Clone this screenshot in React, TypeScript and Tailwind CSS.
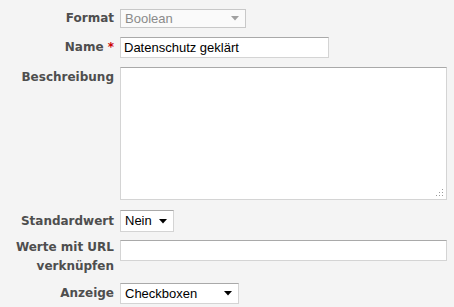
import React from 'react';

const label = "text-right text-[12px] font-bold text-[#4e4e4e] leading-[19px] pr-[6px] w-[120px] shrink-0";
const field = "bg-white border border-[#d4d4d4] border-t-[#a9a9a9] text-[13px] text-black";
const labelFont = { fontFamily: '"DejaVu Sans", Verdana, sans-serif' };

const Arrow = ({ color }: { color: string }) => (
  <svg width="8" height="5" viewBox="0 0 8 5" className="shrink-0">
    <path d="M0 0 H8 L4 4.5 Z" fill={color} />
  </svg>
);

const App = () => {
  return (
    <div
      className="w-[454px] h-[307px] bg-[#f4f4f4] overflow-hidden"
      style={{ fontFamily: '"Liberation Sans", Arial, sans-serif' }}
    >
      <div className="flex flex-col">
        {/* Format */}
        <div className="flex items-center mt-[9px]">
          <div className={label} style={labelFont}>Format</div>
          <div className="w-[126px] h-[19px] bg-[#fafafa] border border-[#c8c8c8] flex items-center justify-between pl-[4px] pr-[6px] text-[13px] text-[#8a8a8a]">
            <span>Boolean</span>
            <Arrow color="#a0a0a0" />
          </div>
        </div>

        {/* Name */}
        <div className="flex items-center mt-[9px]">
          <div className={label} style={labelFont}>
            Name <span className="text-[#cc0000]">*</span>
          </div>
          <div className={`${field} w-[209px] h-[21px] flex items-center pl-[3px]`}>Datenschutz geklärt</div>
        </div>

        {/* Beschreibung */}
        <div className="flex items-start mt-[9px]">
          <div className={`${label} pt-[1px]`} style={labelFont}>Beschreibung</div>
          <div className={`${field} relative w-[327px] h-[133px]`}>
            <svg width="8" height="8" viewBox="0 0 8 8" className="absolute right-[2px] bottom-[2px]">
              <rect x="6" y="0" width="1" height="1" fill="#9a9a9a" />
              <rect x="3" y="3" width="1" height="1" fill="#9a9a9a" />
              <rect x="6" y="3" width="1" height="1" fill="#9a9a9a" />
              <rect x="0" y="6" width="1" height="1" fill="#9a9a9a" />
              <rect x="3" y="6" width="1" height="1" fill="#9a9a9a" />
              <rect x="6" y="6" width="1" height="1" fill="#9a9a9a" />
            </svg>
          </div>
        </div>

        {/* Standardwert */}
        <div className="flex items-center mt-[10px]">
          <div className={label} style={labelFont}>Standardwert</div>
          <div className={`${field} w-[54px] h-[22px] flex items-center justify-between pl-[4px] pr-[6px]`}>
            <span>Nein</span>
            <Arrow color="#000" />
          </div>
        </div>

        {/* Werte mit URL */}
        <div className="flex items-start mt-[8px]">
          <div className={`${label} -mt-[2px]`} style={labelFont}>
            Werte mit URL
            <br />
            verknüpfen
          </div>
          <div className={`${field} w-[327px] h-[21px]`} />
        </div>

        {/* Anzeige */}
        <div className="flex items-center mt-[7px]">
          <div className={label} style={labelFont}>Anzeige</div>
          <div className={`${field} w-[119px] h-[21px] flex items-center justify-between pl-[4px] pr-[6px]`}>
            <span>Checkboxen</span>
            <Arrow color="#000" />
          </div>
        </div>
      </div>
    </div>
  );
};

export default App;
